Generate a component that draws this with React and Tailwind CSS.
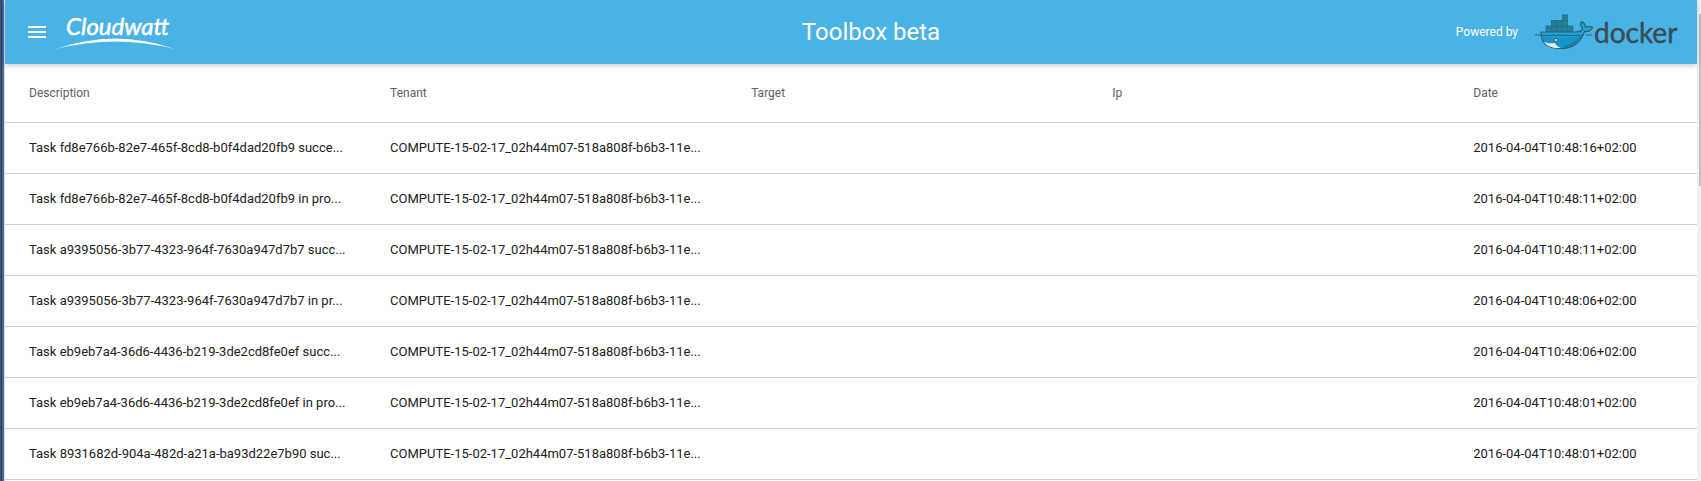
const columns = ["Description", "Tenant", "Target", "Ip", "Date"];

const tenant = "COMPUTE-15-02-17_02h44m07-518a808f-b6b3-11e...";

const tasks = [
  ["Task fd8e766b-82e7-465f-8cd8-b0f4dad20fb9 succe...", "2016-04-04T10:48:16+02:00"],
  ["Task fd8e766b-82e7-465f-8cd8-b0f4dad20fb9 in pro...", "2016-04-04T10:48:11+02:00"],
  ["Task a9395056-3b77-4323-964f-7630a947d7b7 succ...", "2016-04-04T10:48:11+02:00"],
  ["Task a9395056-3b77-4323-964f-7630a947d7b7 in pr...", "2016-04-04T10:48:06+02:00"],
  ["Task eb9eb7a4-36d6-4436-b219-3de2cd8fe0ef succ...", "2016-04-04T10:48:06+02:00"],
  ["Task eb9eb7a4-36d6-4436-b219-3de2cd8fe0ef in pro...", "2016-04-04T10:48:01+02:00"],
  ["Task 8931682d-904a-482d-a21a-ba93d22e7b90 suc...", "2016-04-04T10:48:01+02:00"],
];

function CloudwattLogo() {
  return (
    <svg width="124" height="40" viewBox="0 0 124 40" role="img" aria-label="Cloudwatt">
      <text
        x="13"
        y="23"
        fill="#fff"
        stroke="#fff"
        strokeWidth="0.5"
        className="font-['Lato',sans-serif] text-[24px] italic"
      >
        Cloudwatt
      </text>
      <path d="M3 37 Q62 16 122 37 Q62 22 3 37Z" fill="#fff" />
    </svg>
  );
}

function Whale() {
  return (
    <svg width="60" height="36" viewBox="0 0 60 36" aria-hidden="true">
      <g fill="#1f8299" stroke="#2b6d80" strokeWidth="0.8">
        <rect x="12" y="12" width="5.4" height="5.5" />
        <rect x="17.4" y="12" width="5.4" height="5.5" />
        <rect x="22.8" y="12" width="5.4" height="5.5" />
        <rect x="28.2" y="12" width="5.4" height="5.5" />
        <rect x="33.6" y="12" width="5.4" height="5.5" />
        <rect x="17.4" y="6.5" width="5.4" height="5.5" />
        <rect x="22.8" y="6.5" width="5.4" height="5.5" />
        <rect x="28.2" y="6.5" width="5.4" height="5.5" />
        <rect x="28.2" y="1" width="5.4" height="5.5" />
      </g>
      <path
        d="M7 18H41C45 18 48 16.500 48.500 14.500C46 12 46 9.500 48 7.500C50.500 9 51.500 10.500 51.500 13C54 12 56.500 12 58.500 13.500C57 17 54 18 50.500 17.500C47 28 40 34.500 27 34.500C13 34.500 6.500 29 7 18Z"
        fill="#1ea3d4"
        stroke="#35627a"
        strokeWidth="1.2"
      />
      <path d="M8 22C16 24 36 24 47.500 22C44 29 37 33.800 27 33.800C14 33.800 9 29 8 22Z" fill="#1496c8" />
      <path d="M27 34C38 33 44 29 47.500 22C42 27 36 30 27 34Z" fill="#0c80b0" />
      <path d="M10 28C14 29.500 18 29.500 21 29C22 31 24 33 27 34C18 34.500 13 32 10 28Z" fill="#e3edf0" />
      <circle cx="22" cy="26" r="1.6" fill="#d7e5e9" stroke="#35505b" strokeWidth="0.8" />
      <path
        d="M1 21H7Q10 22.500 13 21Q16 22.500 19 21Q22 22.500 25 21Q28 22.500 31 21Q34 22.500 37 21Q40 22.500 43 21Q46 22.500 49 21M52 21H58"
        fill="none"
        stroke="#2b6680"
        strokeWidth="1.2"
      />
    </svg>
  );
}

function Header() {
  return (
    <header className="relative z-10 grid h-16 grid-cols-3 items-center bg-[#4ab3e6] text-white shadow-[0_2px_5px_rgba(0,0,0,0.2)]">
      <div className="flex items-center gap-1 pl-5">
        <button type="button" aria-label="Open menu" className="flex size-6 items-center justify-center">
          <svg width="24" height="24" viewBox="0 0 24 24" fill="#fff" aria-hidden="true">
            <path d="M3 18h18v-2H3v2zm0-5h18v-2H3v2zm0-7v2h18V6H3z" />
          </svg>
        </button>
        <CloudwattLogo />
      </div>
      <h1 className="pl-10 text-center text-2xl">Toolbox beta</h1>
      <div className="flex items-center justify-end gap-4 pr-4">
        <span className="text-xs">Powered by</span>
        <div className="flex items-center">
          <Whale />
          <svg width="87" height="40" viewBox="0 0 87 40" role="img" aria-label="docker">
            <text
              x="0"
              y="31"
              fill="#394d54"
              stroke="#394d54"
              strokeWidth="0.4"
              className="font-['Lato',sans-serif] text-[28px]"
            >
              docker
            </text>
          </svg>
        </div>
      </div>
    </header>
  );
}

function TaskTable() {
  return (
    <table className="w-full table-fixed border-collapse text-left whitespace-nowrap">
      <colgroup>
        <col className="w-[21.34%]" />
        <col className="w-[21.34%]" />
        <col className="w-[21.34%]" />
        <col className="w-[21.34%]" />
        <col />
      </colgroup>
      <thead>
        <tr className="h-[58px] border-b border-[#d0d0d0]">
          {columns.map((name) => (
            <th key={name} scope="col" className="pl-6 text-xs font-normal text-[#616161]">
              {name}
            </th>
          ))}
        </tr>
      </thead>
      <tbody className="text-[13px] text-[#212121]">
        {tasks.map(([description, date]) => (
          <tr key={description} className="h-[51px] border-b border-[#d0d0d0]">
            <td className="pl-6">{description}</td>
            <td className="pl-6">{tenant}</td>
            <td />
            <td />
            <td className="pl-6">{date}</td>
          </tr>
        ))}
      </tbody>
    </table>
  );
}

export default function App() {
  return (
    <div className="flex min-h-screen bg-white font-['Roboto',sans-serif]">
      <div className="flex w-[5px] shrink-0" aria-hidden="true">
        <div className="w-px bg-[#555555]" />
        <div className="w-px bg-[#2c3a5c]" />
        <div className="w-[2px] bg-[#3f68b5]" />
        <div className="w-px bg-[#dcdcdc]" />
      </div>
      <div className="min-w-0 grow">
        <Header />
        <TaskTable />
      </div>
      <div className="w-1 shrink-0 bg-[#f1f1f1] pt-[14px]" aria-hidden="true">
        <div className="ml-auto h-[172px] w-[2px] bg-[#c1c1c1]" />
      </div>
    </div>
  );
}
